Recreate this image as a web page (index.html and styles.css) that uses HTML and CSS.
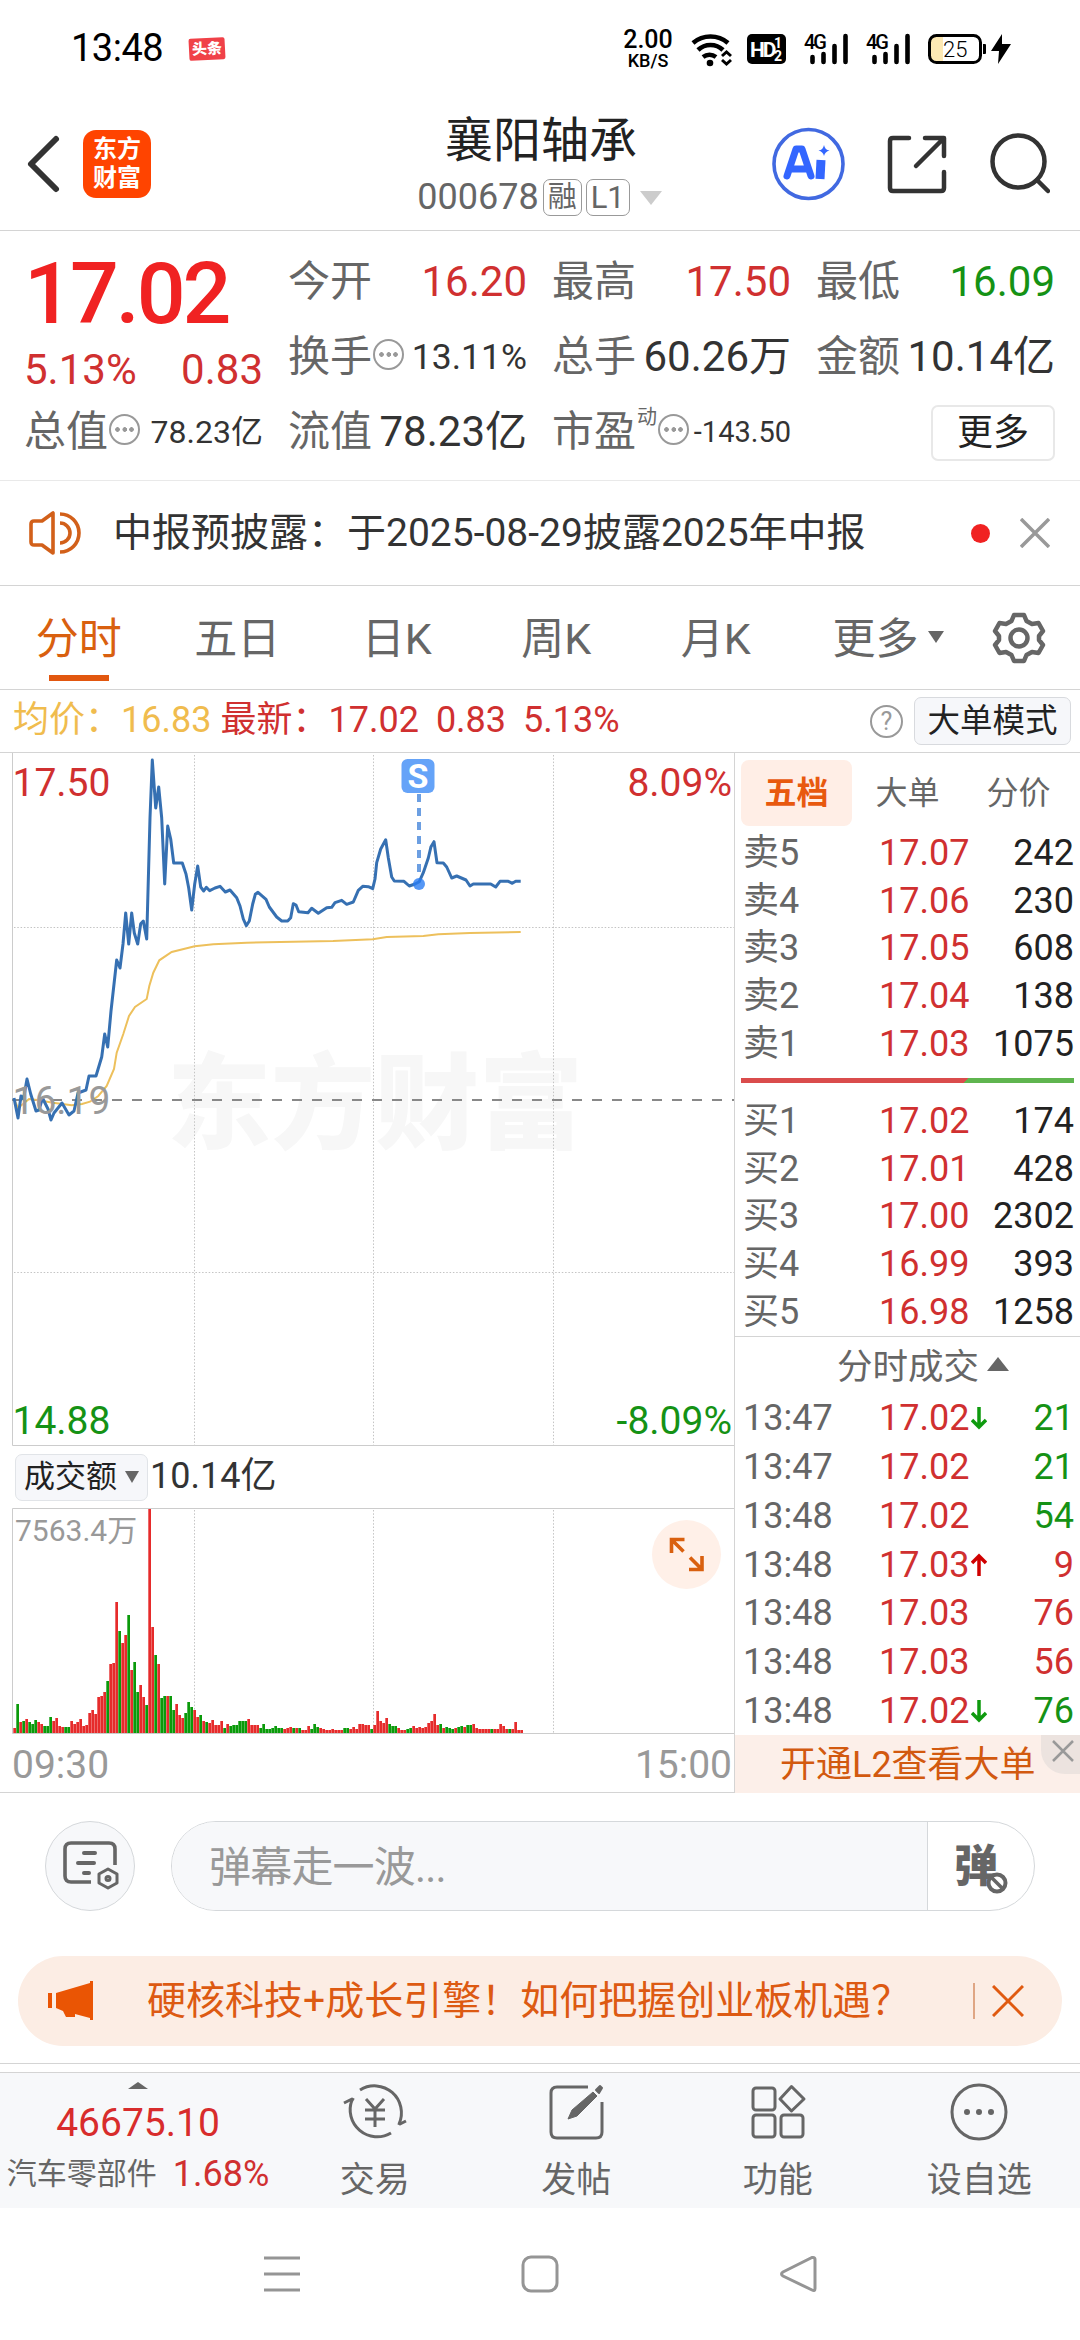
FILE: index.html
```html
<!DOCTYPE html>
<html lang="zh-CN">
<head>
    <meta charset="UTF-8">
    <meta name="viewport" content="width=device-width, initial-scale=1.0">
    <title>襄阳轴承 000678</title>
    <link rel="stylesheet" href="styles.css">
</head>
<body>
    <!-- status bar -->
    <div class="status">
        <span class="clock">13:48</span>
        <span class="toutiao">头条</span>
        <div class="speed"><b>2.00</b><span>KB/S</span></div>
        <svg class="st-icons" width="324" height="40" viewBox="690 28 324 40">
            <g fill="none" stroke="#000" stroke-width="4.6">
                <path d="M693 42a27 27 0 0 1 35 0"/>
                <path d="M698 49a18 18 0 0 1 25 0"/>
                <path d="M703 56a11 11 0 0 1 13 0"/>
                <path d="M722 55l4.500-4 4.500 4M722 59l4.500 4 4.500-4" stroke-width="3"/>
            </g>
            <circle cx="710" cy="62" r="3.300"/>
            <rect x="747" y="33" width="39" height="30" rx="5"/>
            <text x="750" y="56" class="hd">HD</text>
            <text x="774" y="47" class="hd-s">1</text>
            <text x="774" y="60" class="hd-s">2</text>
            <text x="804" y="48" class="g4">4G</text>
            <path d="M812.500 56v5M823.500 53v8M834.500 45v16M845.500 35v26" class="bars"/>
            <text x="866" y="48" class="g4">4G</text>
            <path d="M874.500 56v5M885.500 53v8M896.500 45v16M907.500 35v26" class="bars"/>
            <path d="M931 36h12v24h-12z" fill="#fde9b4"/>
            <rect x="929.500" y="34.500" width="51" height="27" rx="7" fill="none" stroke="#000" stroke-width="3"/>
            <path d="M983 43h2q1 0 1 1v8q0 1-1 1h-2z"/>
            <text x="943" y="56" class="bat">25</text>
            <path d="M1002 33l-11 17h8l-1 13 13-20h-9z"/>
        </svg>
    </div>

    <!-- title bar -->
    <div class="header">
        <svg class="back" width="36" height="62" viewBox="0 0 36 62"><path d="M31 6L6 31l25 25" fill="none" stroke="#333" stroke-width="6" stroke-linecap="round" stroke-linejoin="round"/></svg>
        <div class="logo"><span>东方</span><span>财富</span></div>
        <div class="title">
            <div class="name">襄阳轴承</div>
            <div class="code">000678<i>融</i><i>L1</i><b></b></div>
        </div>
        <svg width="280" height="76" viewBox="770 125 280 76" fill="none" stroke="#333" stroke-width="4.500" stroke-linecap="round" stroke-linejoin="round">
            <circle cx="808.500" cy="163" r="34.500" stroke="#4169e1" stroke-width="3.600"/>
            <path d="M787 175l9-27h6l9 27M791 168h15" stroke="#3366ff" stroke-width="7"/>
            <path d="M821 159l-1 19" stroke="#3366ff" stroke-width="9" stroke-linecap="butt"/>
            <path d="M824 144q1 5 5.500 5.500q-4.500 1-5.500 5.500q-1-4.500-5.500-5.500q4.500-.5 5.500-5.500z" fill="#3366ff" stroke="none"/>
            <path d="M909 137h-16q-3 0-3 3v47q0 3 3 3h48q3 0 3-3v-16M925 137h19v18M943 138l-27 27"/>
            <circle cx="1018.500" cy="160.500" r="26"/>
            <path d="M1037 179l11 11"/>
        </svg>
    </div>

    <!-- quote -->
    <div class="quote">
        <div class="col">
            <div class="price">17.02</div>
            <div class="chg"><span>5.13%</span><span>0.83</span></div>
            <div class="cell"><label>总值</label><em class="tip"></em><span class="v32">78.23亿</span></div>
        </div>
        <div class="col">
            <div class="cell"><label>今开</label><span class="red">16.20</span></div>
            <div class="cell"><label>换手</label><em class="tip"></em><span class="v35">13.11%</span></div>
            <div class="cell"><label>流值</label><span>78.23亿</span></div>
        </div>
        <div class="col">
            <div class="cell"><label>最高</label><span class="red">17.50</span></div>
            <div class="cell"><label>总手</label><span>60.26万</span></div>
            <div class="cell"><label>市盈<sup>动</sup></label><em class="tip"></em><span class="v29">-143.50</span></div>
        </div>
        <div class="col">
            <div class="cell"><label>最低</label><span class="green">16.09</span></div>
            <div class="cell"><label>金额</label><span>10.14亿</span></div>
            <div class="cell"><button class="more">更多</button></div>
        </div>
    </div>

    <!-- notice -->
    <div class="notice">
        <svg width="52" height="46" viewBox="0 0 52 46" fill="none" stroke="#d2601a" stroke-width="3.600" stroke-linejoin="round">
            <path d="M24 3v40l-11-8H5q-3 0-3-3V14q0-3 3-3h8z"/>
            <path d="M31 13a10 10 0 0 1 0 20M31 4a19 19 0 0 1 0 38"/>
        </svg>
        <span>中报预披露：于2025-08-29披露2025年中报</span>
        <b class="dot"></b>
        <svg width="30" height="30" viewBox="0 0 30 30"><path d="M1 1l28 28M29 1L1 29" stroke="#999" stroke-width="3.500"/></svg>
    </div>

    <!-- period tabs -->
    <div class="tabs">
        <div class="tab on">分时</div>
        <div class="tab">五日</div>
        <div class="tab">日K</div>
        <div class="tab">周K</div>
        <div class="tab">月K</div>
        <div class="tab wide">更多<b class="down"></b></div>
        <svg width="54" height="54" viewBox="-27 -27 54 54" fill="none" stroke="#666" stroke-width="4.500" stroke-linejoin="round">
            <path d="M-5 -23H5L7.500 -17L13 -14L19.500 -15L24 -7L20 -2V2L24 7L19.500 15L13 14L7.500 17L5 23H-5L-7.500 17L-13 14L-19.500 15L-24 7L-20 2V-2L-24 -7L-19.500 -15L-13 -14L-7.500 -17Z"/>
            <circle r="8.500"/>
        </svg>
    </div>

    <div class="info">
        <span class="avg">均价：16.83</span>
        <span class="last">最新：17.02</span>
        <span class="last">0.83</span>
        <span class="last">5.13%</span>
        <i class="help">?</i>
        <button class="mode">大单模式</button>
    </div>

    <div class="main">
        <div class="left">
            <svg class="chart" width="734" height="693" viewBox="0 752 734 693">
                <text x="167" y="1140" class="mark">东方财富</text>
                <path d="M194.500 754v690M373.500 754v690M553.500 754v690M14 926.500h720M14 1271.500h720" class="grid"/>
                <path d="M12.500 752v692.500H734" class="frame"/>
                <path d="M12 1099h722" class="mid"/>
                <polyline class="avg-line" points="14,1098 18,1107 23,1103 29,1098 37,1099 53,1101.7 71.7,1104.3 82,1103 90,1100.7 98.3,1095 106.7,1085 114,1068 116.7,1051.7 123.3,1033 129,1015 135,1006 146.7,998 149.3,985 153.3,971.7 159.3,959.3 171.7,951 194.7,945.3 213.3,943.3 246.7,941.7 333,940 372.7,938.3 386.7,936 423.3,935 438.3,933.3 470,932 520.7,931"/>
                <polyline class="price-line" points="14,1097 18,1117 21,1095 23.5,1098 27,1078 30.7,1093 36,1110 39,1109 42.5,1097 48,1108 51,1119 54,1112 62,1102 69,1114 74,1110 78,1092 86,1089 89,1075 96,1075 101.7,1056 104.7,1033 107.7,1046 111,1010 116.7,959 120,967 123,943 125.7,912 128.7,943 131.7,912 134.3,932 137.7,943 140.7,922.7 143.3,920 146.7,938 150,817 152.3,759 155.7,807 158.7,786 161.7,817 164.7,883 167.7,825 170.7,838 173.7,862 182.3,862 186,873 188.7,887 191.7,909 194.7,883 197.7,865 200.7,886 203.7,890 206.3,886.3 209.7,889.7 215,887 220,885.3 225.3,891 230,889 236.7,896.7 240,905 243.3,918 246.3,924.7 249.3,920 252.7,903 255.3,893.3 258,891.3 266,898.3 269.3,906 276.7,916 281.7,920 287.7,920 290.7,916.7 293.3,902.7 296,904 298.7,910.7 308,911.7 311.7,907.3 318.3,912.3 326.7,906.7 331.7,906.3 335,901.7 341.7,899.3 346.7,903.3 353.3,901 358.3,889.3 362.7,885.3 368.3,885.7 372.7,887.7 375,878 376.7,861.7 380.7,848 385.7,838.7 388.3,856.7 391.7,876 394.3,880 404,880.3 409.3,885 415,883 419.3,880.7 423.3,871.7 428.3,857 431,845.7 434,840.7 435.3,850 437,861.7 443.3,862 446.7,866 451.7,877 456.7,875 466,879 470,885 473.3,883 490.7,883 495.7,886 500,880.3 508.3,880.3 512.3,882.3 515.7,880.3 520.7,880.3"/>
                <path d="M419 793v82" class="sell"/>
                <circle cx="419" cy="883" r="6" fill="#2b7df2" fill-opacity=".8"/>
                <rect x="401.500" y="758" width="33" height="34" rx="6" fill="#65a3f8"/>
                <text x="418" y="787" class="s">S</text>
                <text x="12.500" y="795" class="ax red">17.50</text>
                <text x="732" y="795" class="ax end red">8.09%</text>
                <text x="12.500" y="1113" class="ax">16.19</text>
                <text x="12.500" y="1433" class="ax green">14.88</text>
                <text x="732" y="1433" class="ax end green">-8.09%</text>
            </svg>
            <div class="vol-head">
                <button class="pick">成交额<b class="down"></b></button>
                <span>10.14亿</span>
            </div>
            <svg class="chart" width="734" height="285" viewBox="0 1507 734 285">
                <path d="M194.500 1509v223M373.500 1509v223M553.500 1509v223" class="grid"/>
                <g id="vol"></g>
                <path d="M734 1507.500H12.500V1732.500H734" class="frame"/>
                <text x="15" y="1540" class="ax sm">7563.4万</text>
                <circle cx="686.500" cy="1553.500" r="34.500" fill="#fff0e8"/>
                <path d="M671.500 1552v-13.500h13M672 1539l11.500 11.500M702 1555v13.500h-13M701.500 1568l-11.500-11.500" fill="none" stroke="#d9600f" stroke-width="3.600"/>
                <text x="12" y="1777" class="ax">09:30</text>
                <text x="732" y="1777" class="ax end">15:00</text>
            </svg>
        </div>

        <div class="right">
            <div class="rtabs"><span class="on">五档</span><span>大单</span><span>分价</span></div>
            <div class="book">
                <div class="line"><span>卖5</span><span>17.07</span><span>242</span></div>
                <div class="line"><span>卖4</span><span>17.06</span><span>230</span></div>
                <div class="line"><span>卖3</span><span>17.05</span><span>608</span></div>
                <div class="line"><span>卖2</span><span>17.04</span><span>138</span></div>
                <div class="line"><span>卖1</span><span>17.03</span><span>1075</span></div>
            </div>
            <div class="ratio"></div>
            <div class="book">
                <div class="line"><span>买1</span><span>17.02</span><span>174</span></div>
                <div class="line"><span>买2</span><span>17.01</span><span>428</span></div>
                <div class="line"><span>买3</span><span>17.00</span><span>2302</span></div>
                <div class="line"><span>买4</span><span>16.99</span><span>393</span></div>
                <div class="line"><span>买5</span><span>16.98</span><span>1258</span></div>
            </div>
            <div class="deal-head">分时成交<b class="up"></b></div>
            <div class="deals">
                <div class="line"><span>13:47</span><span>17.02<svg class="arr" viewBox="0 0 16 24"><path d="M8 1v20M1 14l7 7 7-7" stroke="#0e9a0e"/></svg></span><span class="green">21</span></div>
                <div class="line"><span>13:47</span><span>17.02</span><span class="green">21</span></div>
                <div class="line"><span>13:48</span><span>17.02</span><span class="green">54</span></div>
                <div class="line"><span>13:48</span><span>17.03<svg class="arr" viewBox="0 0 16 24"><path d="M8 23V3M1 10l7-7 7 7" stroke="#d00000"/></svg></span><span class="red">9</span></div>
                <div class="line"><span>13:48</span><span>17.03</span><span class="red">76</span></div>
                <div class="line"><span>13:48</span><span>17.03</span><span class="red">56</span></div>
                <div class="line"><span>13:48</span><span>17.02<svg class="arr" viewBox="0 0 16 24"><path d="M8 1v20M1 14l7 7 7-7" stroke="#0e9a0e"/></svg></span><span class="green">76</span></div>
            </div>
            <div class="l2">开通L2查看大单
                <svg class="l2-x" width="39" height="39" viewBox="0 0 39 39"><path d="M12 6l20 20M32 6L12 26" stroke="#999" stroke-width="2.500"/></svg>
            </div>
        </div>
    </div>

    <!-- danmu input -->
    <div class="danmu">
        <div class="round">
            <svg width="58" height="54" viewBox="0 0 58 54" fill="none" stroke="#666" stroke-width="4" stroke-linecap="round" stroke-linejoin="round">
                <path d="M30 43H10q-6 0-6-6V10q0-6 6-6h38q6 0 6 6v16" stroke-width="3.600" stroke-linecap="butt"/>
                <path d="M23 14h11M17 24h16M23 34h5"/>
                <path d="M47 30l9 5v9l-9 5-9-5v-9z" stroke-width="3"/>
                <circle cx="47" cy="39.500" r="1.500"/>
            </svg>
        </div>
        <div class="box">
            <div class="ph">弹幕走一波...</div>
            <div class="off">弹<svg class="ban" width="24" height="24" viewBox="0 0 24 24"><circle cx="12" cy="12" r="8.500" fill="#fff" stroke="#666" stroke-width="4"/><path d="M6 6l12 12" stroke="#666" stroke-width="3.500"/></svg></div>
        </div>
    </div>

    <!-- promo -->
    <div class="promo">
        <svg width="46" height="40" viewBox="0 0 46 40" fill="#ea5504"><path d="M0 12h4v15H0zM8 12L42 2V0h3v39h-3v-2l-15-4v3h-9l-3-6-7-3z"/></svg>
        <span>硬核科技+成长引擎！如何把握创业板机遇？</span>
        <i></i>
        <svg width="32" height="32" viewBox="0 0 32 32"><path d="M1 1l30 30M31 1L1 31" stroke="#e05a10" stroke-width="3"/></svg>
    </div>

    <!-- bottom nav -->
    <div class="nav">
        <div class="index">
            <b class="up"></b>
            <div class="idx">46675.10</div>
            <div class="sector"><span>汽车零部件</span><em>1.68%</em></div>
        </div>
        <div class="item">
            <svg viewBox="-32 -29 64 58"><path d="M-15 -22A27 27 0 0 1 24 12M16 21A27 27 0 0 1 -23 -12M-31 -9l8-4 2 1M31 9l-6 3-2-1M-9 -13L0 -3L9 -13M0 -3V15M-10 -2H10M-10 7H10"/></svg>
            <span>交易</span>
        </div>
        <div class="item">
            <svg viewBox="-32 -29 64 58"><path d="M12 -25H-19q-6 0-6 6V20q0 6 6 6H20q6 0 6-6V-10"/><path d="M-8 7l4-9L17 -20l4 4L1 4z" fill="#666" stroke-width="1"/><path d="M20 -22l4-4 2 2-3 5z" fill="#666" stroke-width="2"/></svg>
            <span>发帖</span>
        </div>
        <div class="item">
            <svg viewBox="-32 -29 64 58"><rect x="-25" y="-24" width="22" height="22" rx="3"/><rect x="-25" y="3" width="22" height="22" rx="3"/><rect x="3" y="3" width="22" height="22" rx="3"/><path d="M13.500 -25.500L26 -13L13.500 -1L2 -13Z"/></svg>
            <span>功能</span>
        </div>
        <div class="item">
            <svg viewBox="-32 -29 64 58"><circle r="27"/><g fill="#666" stroke="none"><circle cx="-12" r="3"/><circle r="3"/><circle cx="12" r="3"/></g></svg>
            <span>设自选</span>
        </div>
    </div>

    <!-- system keys -->
    <div class="keys">
        <svg width="38" height="38" viewBox="0 0 38 38"><path d="M1 3h36M1 19h36M1 35h36"/></svg>
        <svg width="38" height="38" viewBox="0 0 38 38"><rect x="2" y="2" width="34" height="34" rx="8"/></svg>
        <svg width="38" height="38" viewBox="0 0 38 38"><path d="M34 2.500q2 0 2 2v29q0 3-3 1.500L4 21q-3-2 0-4L33 2.500z"/></svg>
    </div>

    <script src="script.js"></script>
</body>
</html>
```
FILE: styles.css
```css
* {
    box-sizing: border-box;
}

body {
    margin: 0;
    width: 1080px;
    height: 2340px;
    overflow: hidden;
    background: #fff;
    color: #333;
    font-family: Roboto, "Noto Sans CJK SC", sans-serif;
    font-size: 36px;
    line-height: 1.2;
}

i, em {
    font-style: normal;
}

button {
    font-family: inherit;
    padding: 0;
    color: #222;
}

svg {
    display: block;
    flex: none;
}

.red { color: #d03030; fill: #d03030; }
.green { color: #159215; fill: #159215; }

.down {
    border: 8px solid transparent;
    border-top: 12px solid #666;
    border-bottom: 0;
}

.up {
    border: 11px solid transparent;
    border-bottom: 14px solid #666;
    border-top: 0;
}

/* status bar */
.status {
    height: 97px;
    display: flex;
    align-items: center;
    padding-left: 71px;
    color: #000;
}

.clock {
    font-size: 38px;
    width: 118px;
    letter-spacing: -0.5px;
}

.toutiao {
    width: 36px;
    height: 22px;
    line-height: 22px;
    background: #f04148;
    color: #fff;
    font-size: 15px;
    font-weight: 900;
    text-align: center;
    border-radius: 2px;
    transform: rotate(-3deg);
}

.speed {
    width: 60px;
    margin-left: 393px;
    margin-right: 12px;
    text-align: center;
    font-weight: 500;
}

.speed b {
    display: block;
    font-size: 25px;
    line-height: 23px;
    font-weight: 500;
}

.speed span {
    display: block;
    font-size: 18px;
    line-height: 19px;
}

.hd { fill: #fff; font-size: 21px; font-weight: 700; letter-spacing: -2px; }
.hd-s { fill: #fff; font-size: 14px; font-weight: 700; }
.g4 { font-size: 20px; font-weight: 500; letter-spacing: -2px; }
.bat { font-size: 22px; font-weight: 300; }
.bars { stroke: #000; stroke-width: 4.6; stroke-linecap: round; }

/* title bar */
.header {
    height: 134px;
    border-bottom: 1px solid #d4d4d4;
    display: flex;
    align-items: center;
    padding: 0 30px 0 25px;
}

.logo {
    width: 68px;
    height: 68px;
    margin-left: 22px;
    border-radius: 13px;
    background: #ff4400;
    color: #fff;
    font-size: 24px;
    font-weight: 700;
    line-height: 29px;
    display: flex;
    flex-direction: column;
    align-items: center;
    justify-content: center;
}

.title {
    flex: 1;
    padding: 4px 0 0 168px;
    text-align: center;
}

.name {
    font-size: 48px;
    line-height: 64px;
    color: #222;
    margin-right: 7px;
}

.code {
    display: flex;
    align-items: center;
    justify-content: center;
    line-height: 49px;
    color: #666;
    margin-right: 10px;
}

.code i {
    height: 37px;
    line-height: 35px;
    padding: 0 4px;
    border: 1px solid #999;
    border-radius: 7px;
    font-size: 29px;
    margin-left: 4px;
}

.code i + i {
    font-size: 31px;
}

.code b {
    margin-left: 10px;
    border: 11px solid transparent;
    border-top: 14px solid #ccc;
    border-bottom: 0;
}

/* quote */
.quote {
    height: 250px;
    border-bottom: 1px solid #e9e9e9;
    display: flex;
    gap: 25px;
    padding: 14px 24px 0;
    font-size: 42px;
}

.col {
    width: 239px;
}

.price {
    height: 98px;
    line-height: 98px;
    font-size: 86px;
    font-weight: 500;
    letter-spacing: -3px;
    color: #f02222;
}

.chg {
    height: 52px;
    line-height: 53px;
    display: flex;
    justify-content: space-between;
    color: #d03030;
}

.cell {
    height: 75px;
    display: flex;
    align-items: center;
    white-space: nowrap;
}

.cell label {
    color: #666;
    display: flex;
}

.cell sup {
    font-size: 20px;
    line-height: 20px;
    margin-left: 1px;
}

.cell > span {
    margin-left: auto;
}

.cell .v35 { font-size: 35.5px; }
.cell .v32 { font-size: 32px; }
.cell .v29 { font-size: 29px; }

.tip {
    width: 31px;
    height: 31px;
    border: 2px solid #999;
    border-radius: 50%;
    margin: -7px 0 0 1px;
    background: radial-gradient(circle, #999 2px, transparent 2.6px) center / 7.500px 27px no-repeat,
        radial-gradient(circle, #999 2px, transparent 2.6px) 3px center / 7px 27px no-repeat,
        radial-gradient(circle, #999 2px, transparent 2.6px) 17px center / 7px 27px no-repeat;
}

.more {
    width: 124px;
    height: 56px;
    margin-left: auto;
    border: 2px solid #e8e8e8;
    border-radius: 7px;
    background: #fff;
    font-size: 36px;
    line-height: 50px;
}

/* notice */
.notice {
    height: 105px;
    border-bottom: 1px solid #d4d4d4;
    display: flex;
    align-items: center;
    padding: 0 30px 0 29px;
    font-size: 39px;
}

.notice span {
    flex: 1;
    margin-left: 32px;
}

.dot {
    width: 19px;
    height: 19px;
    border-radius: 50%;
    background: #f02222;
    margin-right: 30px;
}

/* period tabs */
.tabs {
    height: 104px;
    border-bottom: 1px solid #d4d4d4;
    display: flex;
    align-items: center;
    font-size: 43px;
    color: #666;
}

.tab {
    width: 159.5px;
    height: 103px;
    padding-top: 2px;
    line-height: 104px;
    display: flex;
    justify-content: center;
    align-items: center;
}

.tab.on {
    width: 157.5px;
    color: #d9600f;
    background: linear-gradient(#e2570f, #e2570f) center 89px / 60px 6px no-repeat;
}

.tab.wide {
    width: 185px;
    margin-right: 11px;
}

.tab .down {
    margin-left: 9px;
    margin-top: -4px;
}

.info {
    height: 63px;
    border-bottom: 1px solid #d4d4d4;
    display: flex;
    align-items: center;
    padding: 0 9px 0 13px;
}

.avg { color: #f0bc4e; margin-right: 9px; }
.last { color: #d03030; margin-right: 17px; }

.help {
    width: 33px;
    height: 33px;
    line-height: 29px;
    border: 2px solid #999;
    border-radius: 50%;
    color: #999;
    font-size: 25px;
    text-align: center;
    margin-left: auto;
    margin-right: 11px;
}

.mode {
    width: 157px;
    height: 48px;
    background: #f6f7fa;
    border: 1px solid #d8dade;
    border-radius: 7px;
    font-size: 32.5px;
    line-height: 46px;
}

/* charts */
.main {
    display: flex;
    height: 1040px;
    border-bottom: 1px solid #d4d4d4;
}

.left {
    width: 734px;
}

.grid { stroke: #c4c4c4; stroke-width: 1; stroke-dasharray: 1.5 1.8; }
.frame { fill: none; stroke: #ccc; stroke-width: 1; }
.mid { stroke: #888; stroke-width: 2; stroke-dasharray: 10 10; }
.avg-line { fill: none; stroke: #edc05c; stroke-width: 2; }
.price-line { fill: none; stroke: #3670b2; stroke-width: 3; stroke-linejoin: round; }
.sell { stroke: #6c9fe2; stroke-width: 4; stroke-dasharray: 8 6; }
.mark { font-size: 104px; font-weight: 900; fill: #f7f7f7; }
.s { font-size: 34px; font-weight: 700; fill: #fff; text-anchor: middle; }
.ax { font-size: 39px; }
.ax:not(.red):not(.green) { fill: #999; }
.ax.end { text-anchor: end; }
.ax.sm { font-size: 30px; }

.vol-head {
    height: 62px;
    display: flex;
    align-items: center;
    padding-left: 15px;
}

.pick {
    width: 133px;
    height: 47px;
    margin-right: 2px;
    background: #f6f7fa;
    border: 1px solid #e1e4e8;
    border-radius: 7px;
    font-size: 31px;
    line-height: 44px;
    display: flex;
    align-items: center;
    justify-content: center;
}

.pick .down {
    border-width: 12px 7px 0;
    margin-left: 8px;
}

/* order book */
.right {
    width: 346px;
    border-left: 1px solid #d4d4d4;
    display: flex;
    flex-direction: column;
}

.right > div {
    flex: none;
}

.rtabs {
    display: flex;
    height: 76px;
    padding: 7px 0 0 6px;
    font-size: 32px;
    line-height: 67px;
    color: #666;
}

.rtabs span {
    width: 111px;
    height: 66px;
    text-align: center;
}

.rtabs .on {
    background: #ffeee6;
    color: #e8590f;
    border-radius: 8px;
    font-weight: 700;
}

.book {
    height: 239px;
    display: flex;
    flex-direction: column;
}

.line {
    flex: 1;
    display: flex;
    align-items: center;
    padding: 0 6px 0 8px;
    line-height: 40px;
    color: #666;
}

.line span:nth-child(1) { width: 136px; }
.line span:nth-child(2) { width: 110px; color: #d03030; display: flex; align-items: center; }
.line span:nth-child(3) { margin-left: auto; }
.book .line span:nth-child(3) { color: #222; }

.arr {
    width: 16px;
    height: 24px;
    fill: none;
    stroke-width: 3.5;
    margin-left: 2px;
}

.ratio {
    height: 5px;
    margin: 10px 6px 14px;
    background: linear-gradient(135deg, #da4c4c 67.2%, #5fb54f 67.2%);
}

.deal-head {
    height: 58px;
    border-top: 1px solid #d4d4d4;
    display: flex;
    align-items: center;
    justify-content: center;
    font-size: 35.5px;
    color: #666;
    padding: 4px 0 0 55px;
}

.deal-head .up {
    margin: -8px 24px 0 8px;
}

.deals {
    height: 341px;
    display: flex;
    flex-direction: column;
}

.l2 {
    height: 58px;
    position: relative;
    background: #fcefe9;
    color: #d2590f;
    line-height: 60px;
    padding-left: 45px;
}

.l2-x {
    position: absolute;
    right: 0;
    top: 0;
    background: #ece3df;
    border-bottom-left-radius: 24px;
}

/* danmu */
.danmu {
    display: flex;
    height: 90px;
    margin: 28px 45px 0;
}

.round {
    width: 90px;
    border: 1px solid #d5d8db;
    border-radius: 50%;
    background: #f7f8fa;
    display: flex;
    align-items: center;
    justify-content: center;
    margin-right: 36px;
}

.box {
    flex: 1;
    display: flex;
    border: 1px solid #d5d8db;
    border-radius: 45px;
    overflow: hidden;
    line-height: 91px;
}

.ph {
    flex: 1;
    background: #f7f8fa;
    color: #999;
    font-size: 42px;
    letter-spacing: -0.8px;
    padding-left: 37px;
}

.off {
    width: 107px;
    border-left: 1px solid #d5d8db;
    position: relative;
    font-size: 44px;
    font-weight: 900;
    color: #666;
    padding-left: 26px;
}

.ban {
    position: absolute;
    left: 57px;
    top: 49px;
}

/* promo */
.promo {
    height: 90px;
    margin: 45px 18px 0;
    padding: 0 38px 0 30px;
    border-radius: 45px;
    background: #fcede4;
    display: flex;
    align-items: center;
    font-size: 39px;
    color: #dd5a12;
}

.promo span {
    flex: 1;
    margin-left: 53px;
    white-space: nowrap;
}

.promo i {
    width: 2px;
    height: 36px;
    background: #dfa684;
    margin-right: 17px;
}

/* bottom nav */
.nav {
    margin-top: 17px;
    height: 145px;
    border-top: 1px solid #d4d4d4;
    display: flex;
    color: #666;
    background: linear-gradient(#fff 8px, #d4d4d4 8px, #d4d4d4 9px, #f7f8fa 9px);
}

.index {
    width: 274px;
    padding: 18px 0 0 2px;
    display: flex;
    flex-direction: column;
    align-items: center;
}

.index .up {
    border-width: 0 10px 7px;
}

.idx {
    font-size: 39px;
    line-height: 68px;
    color: #d82c2c;
}

.sector {
    font-size: 30px;
    line-height: 34px;
    display: flex;
    align-items: center;
    gap: 16px;
}

.sector em {
    font-size: 36px;
    color: #d03030;
}

.item {
    width: 201.5px;
    padding-top: 19px;
    display: flex;
    flex-direction: column;
    align-items: center;
    font-size: 35px;
    line-height: 42px;
}

.item svg {
    width: 64px;
    height: 58px;
    margin-bottom: 19px;
    fill: none;
    stroke: #666;
    stroke-width: 3;
    stroke-linejoin: round;
}

.keys {
    height: 132px;
    display: flex;
    justify-content: center;
    align-items: center;
    gap: 220px;
}

.keys svg {
    fill: none;
    stroke: #959595;
    stroke-width: 3;
}
```
FILE: script.js
```javascript
// turnover per minute: bar height in px, "g" = falling minute
const bars = "5 29g 11 12g 14 11g 9g 13g 11 9 7g 7g 16g 12 15 7 6 6g 6g 12 9 11 14 7 8 20 23 19 36 37 41 52g 69 70 131 102g 90 98 118g 63 71g 41g 48 36 28g " +
    "224 106 78g 69 35g 37g 37 37g 23g 29 18 15 20g 31g 26g 23 16 18g 12 11g 10 13 8 8 12 5g 9 7g 8g 8g 12g 12g 12g 14 8 8 8 5g 9g 4g 4g 5g 7g 5g 5g 4 5 6 5g 5 5g 3 3 7 4g " +
    "9g 6g 5 4 3 3 4 3 3 3 5g 5g 4 6 4 9 9 8 8 4g 8 22 12 10 15 9g 7g 7g 5 3 3 4g 5g 7 5 6 5 6 10 12 19 8 9g 5 6g 5g 4g 5 6g 7g 6 8g 8g 9 5 4 4 4 4 4g 4 4 9 7 4 4g 4 11 3 3";

const base = 1732;
const g = document.getElementById("vol");

bars.split(" ").forEach(function (b, i) {
    const h = parseInt(b);
    const r = document.createElementNS("http://www.w3.org/2000/svg", "rect");
    r.setAttribute("x", 13.3 + i * 3);
    r.setAttribute("y", base - h);
    r.setAttribute("width", 2.7);
    r.setAttribute("height", h);
    r.setAttribute("fill", b.endsWith("g") ? "#0a9a0a" : "#e62b2b");
    g.appendChild(r);
});
```
